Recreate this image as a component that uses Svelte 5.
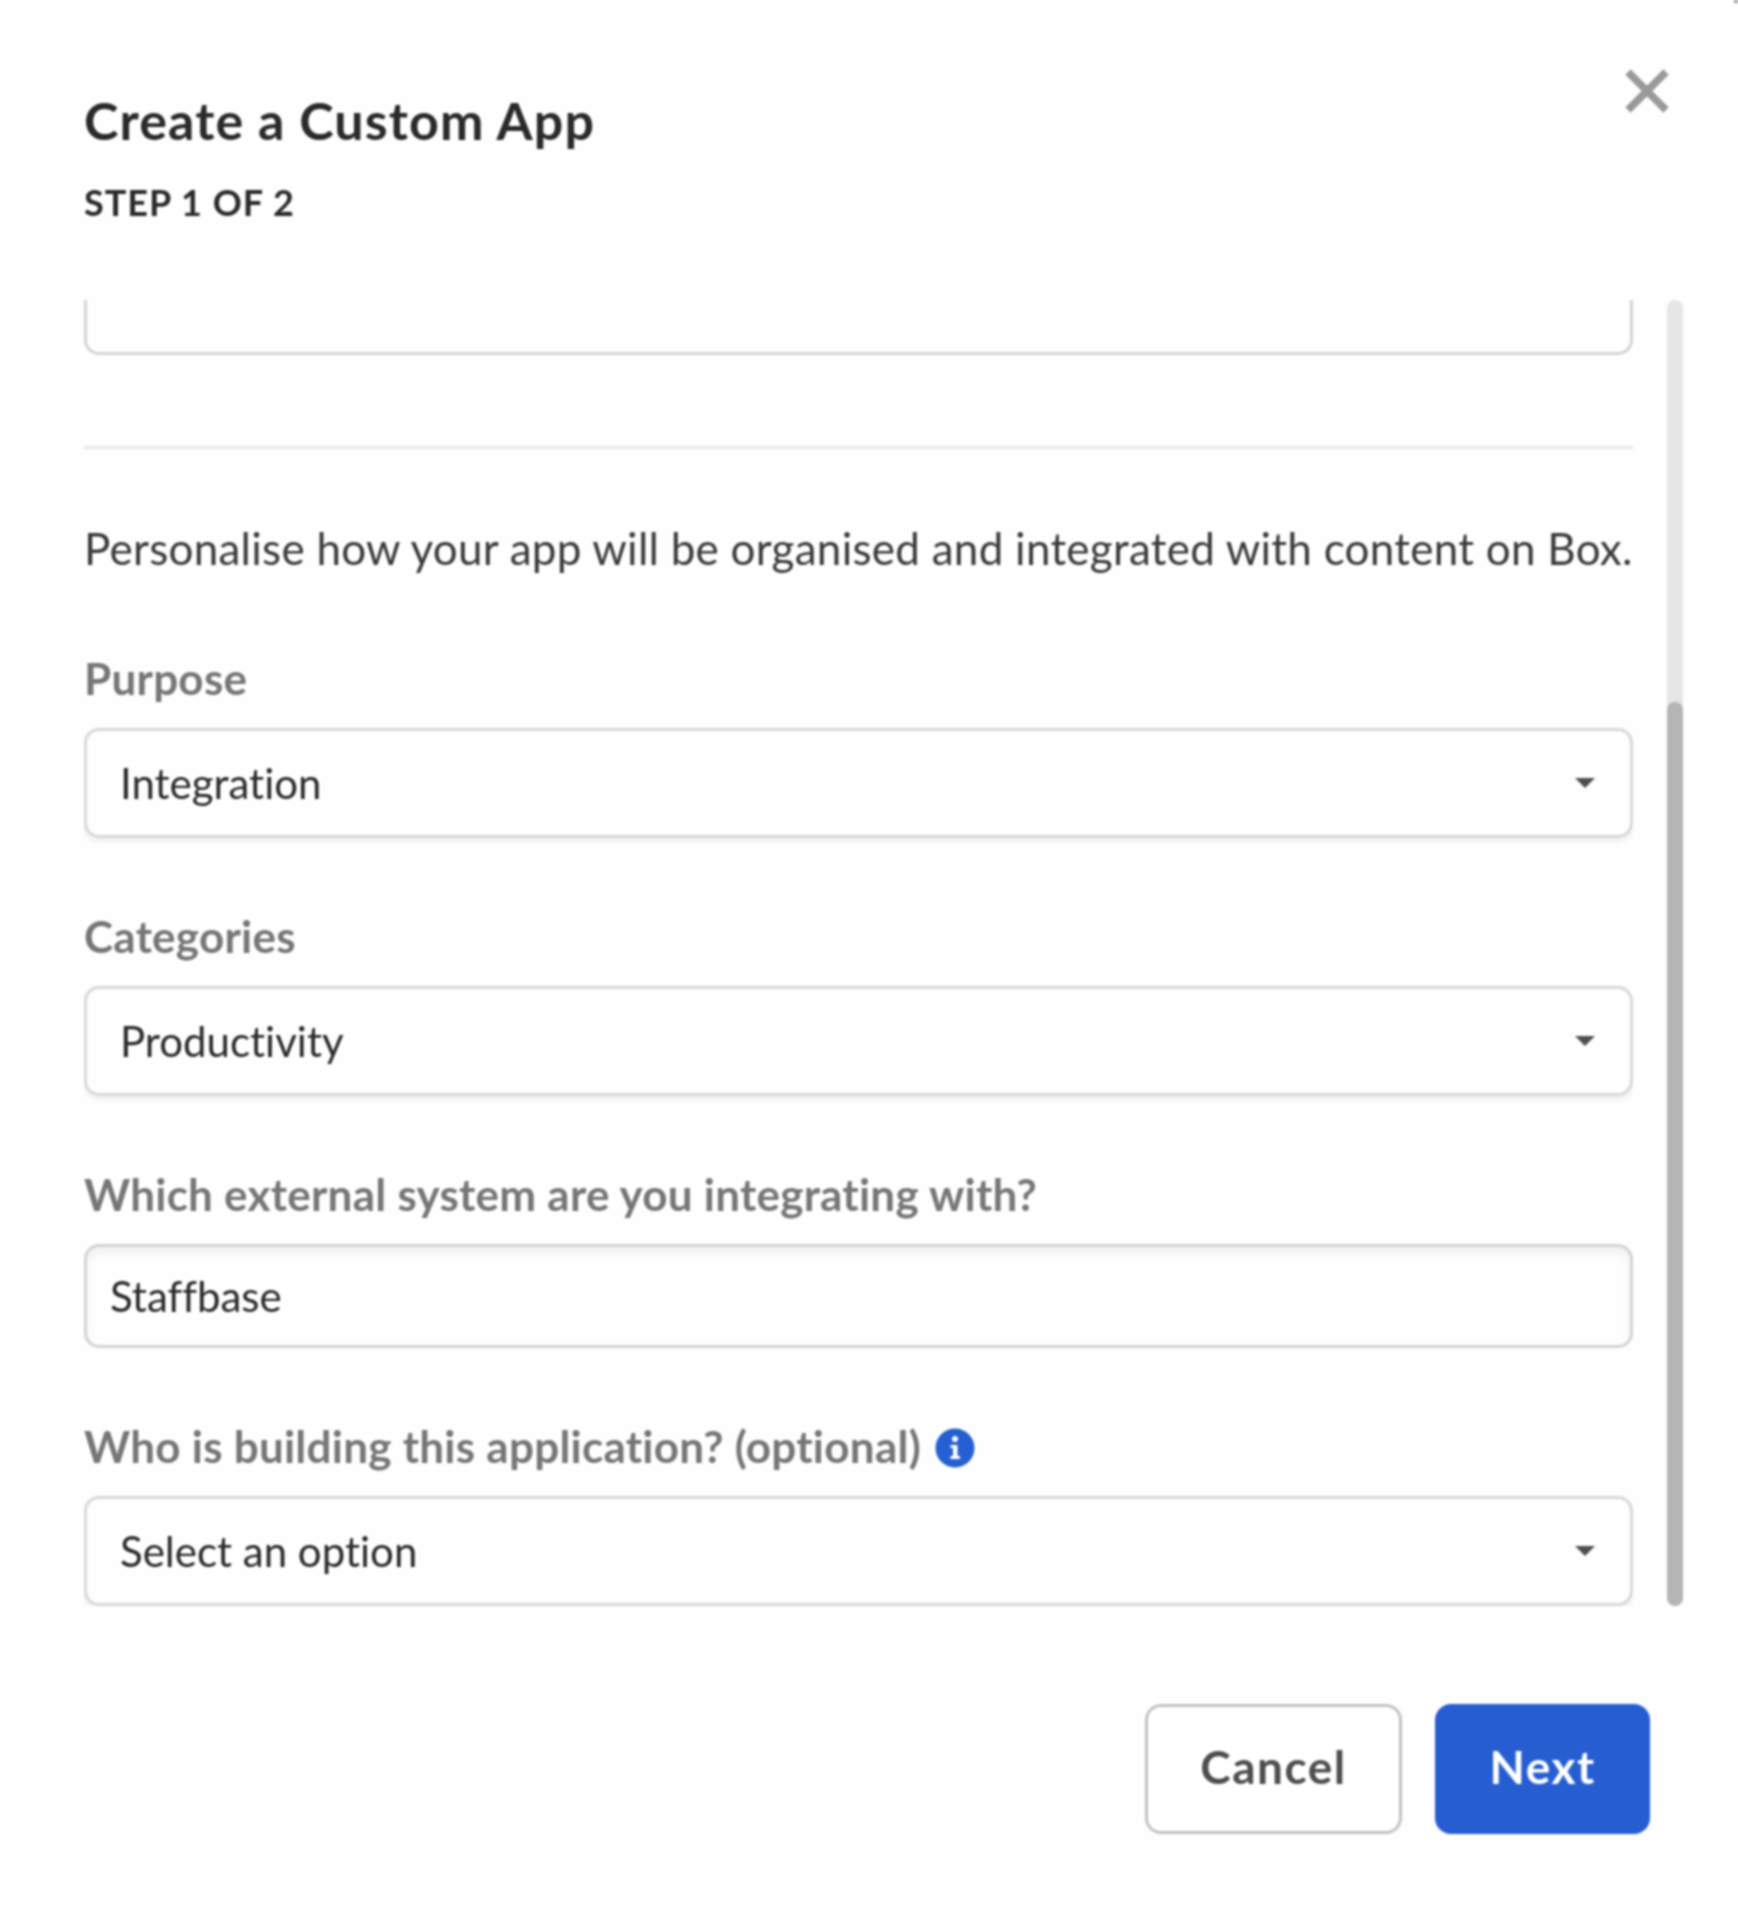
<script lang="ts">
  const fields = [
    { label: 'Purpose', value: 'Integration', kind: 'select' },
    { label: 'Categories', value: 'Productivity', kind: 'select' },
    { label: 'Which external system are you integrating with?', value: 'Staffbase', kind: 'input' },
    { label: 'Who is building this application? (optional)', value: 'Select an option', kind: 'select', info: true }
  ];
</script>

<div class="modal">
  <span class="corner"></span>
  <header class="head">
    <div>
      <h1>Create a Custom App</h1>
      <div class="step">STEP 1 OF 2</div>
    </div>
    <button class="close" aria-label="Close">
      <svg width="44" height="44" viewBox="0 0 44 44">
        <path d="M3 3 L41 41 M41 3 L3 41" stroke="#999" stroke-width="7.5" fill="none" />
      </svg>
    </button>
  </header>

  <div class="body">
    <div class="scroll">
      <div class="stub"></div>
      <hr />
      <p class="intro">Personalise how your app will be organised and integrated with content on Box.</p>
      {#each fields as field}
        <div class="field">
          <div class="label">
            {field.label}
            {#if field.info}
              <svg class="info" width="40" height="40" viewBox="0 0 40 40">
                <circle cx="20" cy="20" r="19.5" fill="#2560d2" />
                <circle cx="20" cy="11" r="3" fill="#fff" />
                <path d="M15.5 17 H22.5 V28 H25 V31 H15.5 V28 H18 V20 H15.5 Z" fill="#fff" />
              </svg>
            {/if}
          </div>
          {#if field.kind === 'select'}
            <div class="select">
              <span>{field.value}</span>
              <svg class="caret" width="20" height="10" viewBox="0 0 20 10">
                <path d="M0 0 H20 L10 10 Z" fill="#4e4e4e" />
              </svg>
            </div>
          {:else}
            <div class="input">{field.value}</div>
          {/if}
        </div>
      {/each}
    </div>
    <div class="track"><div class="thumb"></div></div>
  </div>

  <footer class="foot">
    <button class="btn cancel">Cancel</button>
    <button class="btn next">Next</button>
  </footer>
</div>

<style>
  :global(body) {
    background: #fefefe;
  }

  .modal {
    position: relative;
    width: 1738px;
    height: 1920px;
    box-sizing: border-box;
    padding: 0 55px 0 84px;
    font-family: Lato, "Liberation Sans", sans-serif;
    font-variant-ligatures: none;
    color: #222;
    filter: blur(1px);
  }

  .corner {
    position: absolute;
    top: 0;
    right: 0;
    width: 4px;
    height: 3px;
    background: #999;
  }

  .head {
    height: 300px;
    display: flex;
    justify-content: space-between;
    align-items: flex-start;
    box-sizing: border-box;
    padding-top: 95px;
  }

  h1 {
    margin: 0;
    font-size: 52px;
    line-height: 50px;
    font-weight: 700;
    letter-spacing: 1.1px;
    color: #2a2a2a;
  }

  .step {
    margin-top: 37px;
    font-size: 36px;
    line-height: 40px;
    font-weight: 700;
    letter-spacing: 1px;
    color: #2a2a2a;
  }

  .close {
    margin: -26px 14px 0 0;
    padding: 0;
    border: 0;
    background: none;
    display: block;
  }

  .close svg {
    display: block;
  }

  .body {
    display: flex;
    height: 1306px;
    gap: 34px;
  }

  .scroll {
    width: 1549px;
    overflow: hidden;
  }

  .stub {
    height: 55px;
    box-sizing: border-box;
    border: 3px solid #d3d3d3;
    border-top: 0;
    border-radius: 0 0 15px 15px;
  }

  hr {
    margin: 91px 0 0;
    border: 0;
    height: 3px;
    background: #e8e8e8;
  }

  .intro {
    margin: 74px 0 73px;
    font-size: 44px;
    line-height: 50px;
    letter-spacing: 0.26px;
    white-space: nowrap;
    color: #3a3a3a;
  }

  .field {
    margin-top: 66px;
  }

  .label {
    display: flex;
    align-items: center;
    gap: 14px;
    height: 64px;
    margin-bottom: 18px;
    font-size: 44px;
    font-weight: 700;
    letter-spacing: 0.25px;
    color: #767676;
    white-space: nowrap;
  }

  .info {
    margin-top: 4px;
  }

  .select {
    height: 110px;
    box-sizing: border-box;
    padding: 0 35px 0 33px;
    display: flex;
    align-items: center;
    justify-content: space-between;
    border: 3px solid #d8d8d8;
    border-radius: 15px;
    box-shadow: 0 3px 6px rgba(0, 0, 0, 0.08);
    font-size: 42px;
    color: #2a2a2a;
  }

  .input {
    height: 104px;
    box-sizing: border-box;
    padding: 0 23px;
    display: flex;
    align-items: center;
    border: 3px solid #d3d3d3;
    border-radius: 15px;
    box-shadow: inset 0 6px 10px rgba(0, 0, 0, 0.06);
    font-size: 42px;
    color: #2a2a2a;
  }

  .track {
    width: 16px;
    height: 100%;
    border-radius: 8px;
    background: #e6e6e6;
    display: flex;
    align-items: flex-end;
  }

  .thumb {
    width: 16px;
    height: 904px;
    border-radius: 8px;
    background: #b5b5b5;
  }

  .foot {
    display: flex;
    justify-content: flex-end;
    gap: 33px;
    margin: 98px 33px 0 0;
  }

  .btn {
    height: 130px;
    box-sizing: border-box;
    padding: 0 0 5px;
    border-radius: 16px;
    font-family: inherit;
    font-size: 46px;
    font-weight: 700;
    letter-spacing: 1.5px;
  }

  .cancel {
    width: 257px;
    background: #fff;
    border: 3px solid #c2c2c2;
    color: #4e4e4e;
  }

  .next {
    width: 215px;
    background: #265ed2;
    border: 0;
    color: #fff;
  }
</style>
